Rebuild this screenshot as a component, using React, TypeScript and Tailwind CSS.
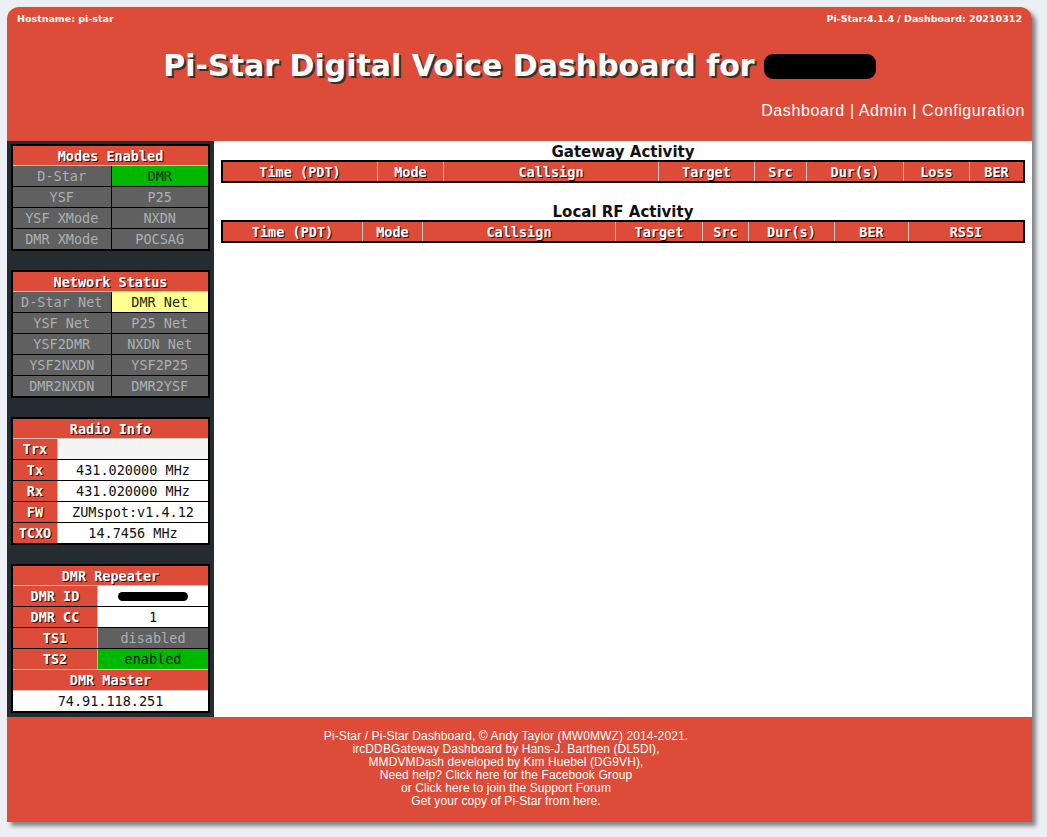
const RED = 'bg-[#dd4b39]'

const modes: [string, boolean][] = [
  ['D-Star', false], ['DMR', true],
  ['YSF', false], ['P25', false],
  ['YSF XMode', false], ['NXDN', false],
  ['DMR XMode', false], ['POCSAG', false]
]

const nets: [string, boolean][] = [
  ['D-Star Net', false], ['DMR Net', true],
  ['YSF Net', false], ['P25 Net', false],
  ['YSF2DMR', false], ['NXDN Net', false],
  ['YSF2NXDN', false], ['YSF2P25', false],
  ['DMR2NXDN', false], ['DMR2YSF', false]
]

const radio: [string, string][] = [
  ['Trx', ''],
  ['Tx', '431.020000 MHz'],
  ['Rx', '431.020000 MHz'],
  ['FW', 'ZUMspot:v1.4.12'],
  ['TCXO', '14.7456 MHz']
]

const gatewayCols = ['Time (PDT)', 'Mode', 'Callsign', 'Target', 'Src', 'Dur(s)', 'Loss', 'BER']
const rfCols = ['Time (PDT)', 'Mode', 'Callsign', 'Target', 'Src', 'Dur(s)', 'BER', 'RSSI']

function SideHeader({ title, h = 'h-[20px]' }: { title: string; h?: string }) {
  return (
    <div className={`${RED} ${h} border-b border-[#c8c8c8] text-center font-bold text-white leading-[20px] [text-shadow:1px_1px_0_#3a0a05]`}>
      {title}
    </div>
  )
}

function StatusTable({ title, items, active }: { title: string; items: [string, boolean][]; active: string }) {
  return (
    <div className="mx-[4px] border-2 border-black font-['DejaVu_Sans_Mono',monospace] text-[13.5px]">
      <SideHeader title={title} />
      <div className="grid grid-cols-2">
        {items.map(([name, on], i) => {
          const last = i >= items.length - 2
          return (
            <div
              key={name}
              className={`text-center leading-[21px] ${last ? 'h-[20px]' : 'h-[21px] border-b border-black'} ${i % 2 === 1 ? 'border-l border-l-black' : ''} ${on ? `${active} text-[#1b2a12]` : 'bg-[#606060] text-[#aab0b4]'}`}
            >
              {name}
            </div>
          )
        })}
      </div>
    </div>
  )
}

function Label({ children, w }: { children: React.ReactNode; w: string }) {
  return (
    <div className={`${RED} ${w} shrink-0 h-full border-r border-[#b8b8b8] text-center font-bold text-white [text-shadow:1px_1px_0_#3a0a05]`}>
      {children}
    </div>
  )
}

function RadioInfo() {
  return (
    <div className="mx-[4px] border-2 border-black font-['DejaVu_Sans_Mono',monospace] text-[13.5px]">
      <SideHeader title="Radio Info" />
      {radio.map(([k, v], i) => (
        <div key={k} className={`flex leading-[21px] ${i < radio.length - 1 ? 'h-[21px] border-b border-black' : 'h-[20px]'}`}>
          <Label w="w-[45px]">{k}</Label>
          <div className={`flex-1 text-center text-[#111] ${k === 'Trx' ? 'bg-[#f4f4f4]' : 'bg-white'}`}>{v}</div>
        </div>
      ))}
    </div>
  )
}

function DmrRepeater() {
  return (
    <div className="mx-[4px] border-2 border-black font-['DejaVu_Sans_Mono',monospace] text-[13.5px]">
      <SideHeader title="DMR Repeater" />
      <div className="flex h-[21px] border-b border-black leading-[21px]">
        <Label w="w-[85px]">DMR ID</Label>
        <div className="flex flex-1 items-center justify-center bg-white">
          <div className="h-[9px] w-[70px] rounded-full bg-black" />
        </div>
      </div>
      <div className="flex h-[21px] border-b border-black leading-[21px]">
        <Label w="w-[85px]">DMR CC</Label>
        <div className="flex-1 bg-white text-center text-[#111]">1</div>
      </div>
      <div className="flex h-[21px] border-b border-black leading-[21px]">
        <Label w="w-[85px]">TS1</Label>
        <div className="flex-1 bg-[#606060] text-center text-[#aab0b4]">disabled</div>
      </div>
      <div className="flex h-[21px] border-b border-[#c8c8c8] leading-[21px]">
        <Label w="w-[85px]">TS2</Label>
        <div className="flex-1 bg-[#00b800] text-center text-[#111]">enabled</div>
      </div>
      <SideHeader title="DMR Master" h="h-[21px]" />
      <div className="h-[20px] bg-white text-center leading-[21px] text-[#111]">74.91.118.251</div>
    </div>
  )
}

function ActivityTable({ title, cols, template }: { title: string; cols: string[]; template: string }) {
  return (
    <div>
      <div className="h-[17px] text-center font-['DejaVu_Sans',sans-serif] text-[15px] font-bold leading-[19px] text-[#111]">{title}</div>
      <div className={`mx-[7px] grid ${template} border-2 border-black ${RED} font-['DejaVu_Sans_Mono',monospace] text-[13.5px] font-bold text-white [text-shadow:1px_1px_0_#3a0a05]`}>
        {cols.map((c, i) => (
          <div key={c} className={`h-[19px] text-center leading-[20px] ${i > 0 ? 'border-l border-[#c8c8c8]' : ''}`}>{c}</div>
        ))}
      </div>
    </div>
  )
}

export default function App() {
  return (
    <div className="min-h-screen bg-[#eceff4] pt-[7px] pb-[15px]">
      <div className="ml-[7px] w-[1025px] shadow-[4px_4px_4px_rgba(0,0,0,0.45)] rounded-t-[12px]">
        <header className={`${RED} h-[134px] rounded-t-[12px] text-white font-['Liberation_Sans',sans-serif]`}>
          <div className="flex justify-between px-[10px] pt-[6px] font-['DejaVu_Sans',sans-serif] text-[9.5px] font-bold leading-[12px]">
            <span>Hostname: pi-star</span>
            <span>Pi-Star:4.1.4 / Dashboard: 20210312</span>
          </div>
          <div className="mt-[23px] flex items-center justify-center font-['DejaVu_Sans',sans-serif] text-[30px] font-bold leading-[36px] [text-shadow:2px_2px_0_#333]">
            <span>Pi-Star Digital Voice Dashboard for</span>
            <span className="ml-[9px] inline-block h-[25px] w-[112px] rounded-[9px] bg-black" />
          </div>
          <div className="mt-[17px] pr-[7px] text-right text-[16px] leading-[20px] tracking-[0.6px]">
            Dashboard | Admin | Configuration
          </div>
        </header>
        <div className="flex h-[576px]">
          <aside className="flex w-[207px] flex-col gap-[19px] bg-[#242c31] pt-[3px]">
            <StatusTable title="Modes Enabled" items={modes} active="bg-[#00b800]" />
            <StatusTable title="Network Status" items={nets} active="bg-[#ffff90]" />
            <RadioInfo />
            <DmrRepeater />
          </aside>
          <main className="flex flex-1 flex-col gap-[20px] bg-white pt-[2px]">
            <ActivityTable
              title="Gateway Activity"
              cols={gatewayCols}
              template="grid-cols-[154px_66px_215px_96px_52px_97px_66px_54px]"
            />
            <ActivityTable
              title="Local RF Activity"
              cols={rfCols}
              template="grid-cols-[139px_60px_193px_87px_46px_86px_74px_115px]"
            />
          </main>
        </div>
        <footer className={`${RED} h-[105px] pt-[13px] pr-[27px] text-center font-['Liberation_Sans',sans-serif] text-[12px] leading-[13px] tracking-[0.1px] text-white`}>
          <div>Pi-Star / Pi-Star Dashboard, © Andy Taylor (MW0MWZ) 2014-2021.</div>
          <div>ircDDBGateway Dashboard by Hans-J. Barthen (DL5DI),</div>
          <div>MMDVMDash developed by Kim Huebel (DG9VH),</div>
          <div>Need help? Click here for the Facebook Group</div>
          <div>or Click here to join the Support Forum</div>
          <div>Get your copy of Pi-Star from here.</div>
        </footer>
      </div>
    </div>
  )
}
